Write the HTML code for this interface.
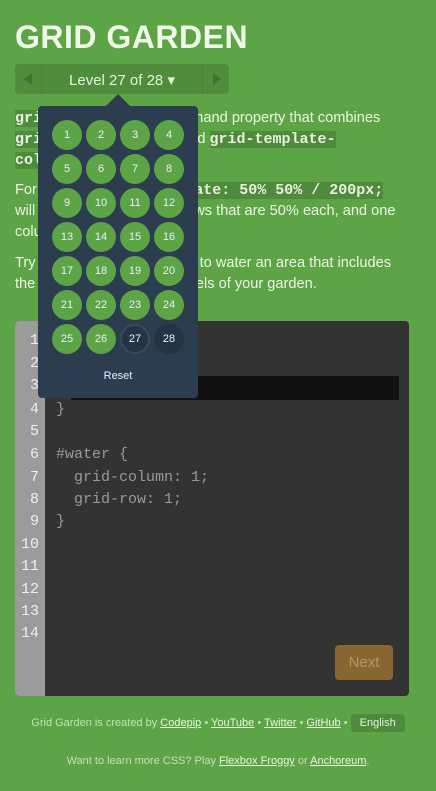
<!DOCTYPE html>
<html><head><meta charset="utf-8"><style>
*{margin:0;padding:0;box-sizing:border-box}
body{width:436px;height:791px;background:#5ca446;font-family:"Liberation Sans",sans-serif;color:#eef5e6;position:relative;overflow:hidden}
h1{position:absolute;left:15px;top:19px;font-size:32px;font-weight:bold;letter-spacing:0.5px;color:#f0f7e8}
.nav{position:absolute;left:15px;top:64px;width:214px;height:30px;background:#4f8d3d;border-radius:4px}
.nav .l{position:absolute;left:0;top:0;width:27px;height:30px;border-right:1px solid #4a8238}
.nav .r{position:absolute;right:0;top:0;width:27px;height:30px;border-left:1px solid #4a8238}
.tri{position:absolute;top:9px;width:0;height:0;border-top:6px solid transparent;border-bottom:6px solid transparent}
.nav .lbl{position:absolute;left:27px;right:27px;top:7px;text-align:center;font-size:15px;color:#e8f0e0}
p{position:absolute;left:15px;width:400px;font-size:14.6px;line-height:21px;white-space:nowrap}
code{font-family:"Liberation Mono",monospace;font-weight:bold;background:#4e8b3c;color:#e8f0e0;font-size:15px}
.pop{position:absolute;left:38px;top:106px;width:160px;height:292px;background:#2c3d50;border-radius:4px}
.arr{position:absolute;left:106px;top:94px;border-left:12px solid transparent;border-right:12px solid transparent;border-bottom:12px solid #2c3d50}
.c{position:absolute;width:30px;height:30px;border-radius:50%;background:#5ca446;color:#eef;font-size:11px;text-align:center;line-height:30px}
.code{position:absolute;left:15px;top:321px;width:394px;height:375px;background:#333;border-radius:4px;overflow:hidden}
.gut{position:absolute;left:0;top:0;width:30px;height:375px;background:#9b9b9b}
.ln{position:absolute;left:0;width:24px;text-align:right;font-family:"Liberation Mono",monospace;font-size:15px;color:#eee}
.cl{position:absolute;left:41px;font-family:"Liberation Mono",monospace;font-size:15px;color:#999}
.inp{position:absolute;left:56px;top:55px;width:328px;height:24px;background:#111}
.next{position:absolute;left:320px;top:324px;width:58px;height:35px;background:#8a6630;border-radius:4px;color:#b49570;font-size:15px;text-align:center;line-height:35px}
.f{position:absolute;left:0;width:436px;text-align:center;font-size:11px;color:#c5e0b5}
.f u{color:#eaf4e0}
.en{display:inline-block;background:#4e8b3c;color:#e8f0e0;padding:3px 9px;border-radius:3px}
</style></head><body>
<h1>GRID GARDEN</h1>
<div class="nav"><div class="l"><div class="tri" style="left:9px;border-right:8px solid #3f7430"></div></div><div class="lbl">Level 27 of 28 ▾</div><div class="r"><div class="tri" style="left:10px;border-left:8px solid #3f7430"></div></div></div>
<p style="top:108px"><code>grid-template</code> is a shorthand property that combines<br><code>grid-template-rows</code> and <code>grid-template-</code><br><code>columns</code>.</p>
<p style="top:180px">For example, <code>grid-template: 50% 50% / 200px;</code><br>will create a grid with two rows that are 50% each, and one<br>column that is 200px wide.</p>
<p style="top:253px">Try using <code>grid-template</code> to water an area that includes<br>the top 60% and left 200 pixels of your garden.</p>
<div class="code"><div class="gut"></div>
<div class="inp"></div>
<div class="ln" style="top:11px">1</div><div class="ln" style="top:34px">2</div><div class="ln" style="top:56px">3</div><div class="ln" style="top:80px">4</div><div class="ln" style="top:102px">5</div><div class="ln" style="top:125px">6</div><div class="ln" style="top:148px">7</div><div class="ln" style="top:170px">8</div><div class="ln" style="top:192px">9</div><div class="ln" style="top:215px">10</div><div class="ln" style="top:237px">11</div><div class="ln" style="top:260px">12</div><div class="ln" style="top:282px">13</div><div class="ln" style="top:304px">14</div>
<div class="cl" style="top:11px">#garden {</div><div class="cl" style="top:34px">&nbsp;&nbsp;display: grid;</div>
<div class="cl" style="top:80px">}</div><div class="cl" style="top:125px">#water {</div><div class="cl" style="top:148px">&nbsp;&nbsp;grid-column: 1;</div><div class="cl" style="top:170px">&nbsp;&nbsp;grid-row: 1;</div><div class="cl" style="top:192px">}</div>
<div class="next">Next</div></div>
<div class="arr"></div>
<div class="pop">
<div class="c" style="left:14px;top:14px">1</div><div class="c" style="left:48px;top:14px">2</div><div class="c" style="left:82px;top:14px">3</div><div class="c" style="left:116px;top:14px">4</div>
<div class="c" style="left:14px;top:48px">5</div><div class="c" style="left:48px;top:48px">6</div><div class="c" style="left:82px;top:48px">7</div><div class="c" style="left:116px;top:48px">8</div>
<div class="c" style="left:14px;top:82px">9</div><div class="c" style="left:48px;top:82px">10</div><div class="c" style="left:82px;top:82px">11</div><div class="c" style="left:116px;top:82px">12</div>
<div class="c" style="left:14px;top:116px">13</div><div class="c" style="left:48px;top:116px">14</div><div class="c" style="left:82px;top:116px">15</div><div class="c" style="left:116px;top:116px">16</div>
<div class="c" style="left:14px;top:150px">17</div><div class="c" style="left:48px;top:150px">18</div><div class="c" style="left:82px;top:150px">19</div><div class="c" style="left:116px;top:150px">20</div>
<div class="c" style="left:14px;top:184px">21</div><div class="c" style="left:48px;top:184px">22</div><div class="c" style="left:82px;top:184px">23</div><div class="c" style="left:116px;top:184px">24</div>
<div class="c" style="left:14px;top:218px">25</div><div class="c" style="left:48px;top:218px">26</div><div class="c" style="left:82px;top:218px;background:#253444;border:2px solid #3a4a58;line-height:26px">27</div><div class="c" style="left:116px;top:218px;background:#253444">28</div>
<div style="position:absolute;left:0;width:160px;top:264px;text-align:center;font-size:11px;color:#eef">Reset</div>
</div>
<div class="f" style="top:714px">Grid Garden is created by <u>Codepip</u> • <u>YouTube</u> • <u>Twitter</u> • <u>GitHub</u> • <span class="en">English</span></div>
<div class="f" style="top:755px">Want to learn more CSS? Play <u>Flexbox Froggy</u> or <u>Anchoreum</u>.</div>
</body></html>
